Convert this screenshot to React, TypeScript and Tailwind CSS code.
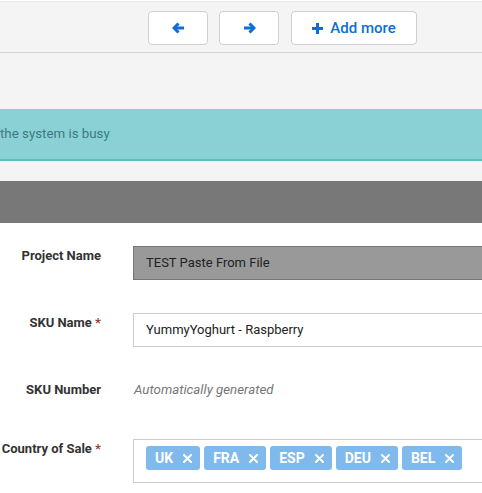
import React from "react";

const tags = ["UK", "FRA", "ESP", "DEU", "BEL"];

function Label({ text, required }: { text: string; required?: boolean }) {
  return (
    <div className="w-[101px] shrink-0 text-right text-[13px] leading-[16px] font-bold text-[#333] whitespace-nowrap pt-[2px]">
      {text}
      {required && <span className="text-[#9a3f3b]"> *</span>}
    </div>
  );
}

function ArrowIcon({ dir }: { dir: "left" | "right" }) {
  return (
    <svg width="13" height="12" viewBox="0 0 13 12" className={dir === "right" ? "-scale-x-100" : ""}>
      <path d="M6.5 1.5 L2 6 L6.5 10.5" fill="none" stroke="currentColor" strokeWidth="3" strokeLinejoin="miter" />
      <path d="M2.5 6 H12" fill="none" stroke="currentColor" strokeWidth="3" />
    </svg>
  );
}

export default function App() {
  return (
    <div
      className="w-[482px] h-[493px] overflow-hidden bg-white"
      style={{ fontFamily: "Roboto, 'Liberation Sans', sans-serif" }}
    >
      <div className="h-px bg-white" />
      <div className="h-[52px] bg-[#f4f4f4] border-t border-[#ebebeb] border-b border-b-[#d6d6d6] flex items-start pt-[9px] pl-[148px]">
        <button className="w-[60px] h-[34px] bg-white border border-[#cfcfcf] rounded-[4px] flex items-center justify-center text-[#0b6fd6]">
          <ArrowIcon dir="left" />
        </button>
        <button className="ml-[11px] w-[60px] h-[34px] bg-white border border-[#cfcfcf] rounded-[4px] flex items-center justify-center text-[#0b6fd6]">
          <ArrowIcon dir="right" />
        </button>
        <button className="ml-[12px] w-[126px] h-[34px] bg-white border border-[#cfcfcf] rounded-[4px] flex items-center justify-center gap-[7px] text-[#0b6fd6] text-[15px] font-medium">
          <svg width="11" height="11" viewBox="0 0 11 11">
            <path d="M5.5 0 V11 M0 5.5 H11" stroke="currentColor" strokeWidth="3" />
          </svg>
          <span>Add more</span>
        </button>
      </div>
      <div className="h-[56px] bg-[#f4f4f4]" />
      <div className="h-[52px] bg-[#8ad1d6] border-b-2 border-[#5bbec5] flex items-center text-[13.3px] text-[#3c7a80]">
        the system is busy
      </div>
      <div className="h-[20px] bg-[#f4f4f4]" />
      <div className="h-[42px] bg-[#787878]" />
      <div className="pt-[23px] flex flex-col">
        <div className="flex gap-[32px]">
          <Label text="Project Name" />
          <div className="flex-1 h-[34px] bg-[#999999] border border-[#777] border-r-0 flex items-center pl-[12px] text-[13px] text-[#222]">
            TEST Paste From File
          </div>
        </div>
        <div className="flex gap-[32px] mt-[33px]">
          <Label text="SKU Name" required />
          <div className="flex-1 h-[34px] bg-white border border-[#cccccc] border-r-0 flex items-center pl-[12px] text-[13px] text-[#222]">
            YummyYoghurt - Raspberry
          </div>
        </div>
        <div className="flex gap-[32px] mt-[33px]">
          <Label text="SKU Number" />
          <div className="pt-[2px] pl-px text-[13.3px] leading-[16px] italic text-[#777]">
            Automatically generated
          </div>
        </div>
        <div className="flex gap-[32px] mt-[41px]">
          <Label text="Country of Sale" required />
          <div className="flex-1 h-[44px] bg-white border border-[#cccccc] border-r-0 flex items-start pt-[6px] pl-[12px] gap-[4px]">
            {tags.map((t) => (
              <span
                key={t}
                className="h-[24px] rounded-[3px] bg-[#80b9eb] text-white font-bold text-[14px] flex items-center pl-[9px] pr-[8px] gap-[10px]"
              >
                {t}
                <svg width="9" height="9" viewBox="0 0 9 9">
                  <path d="M1 1 L8 8 M8 1 L1 8" stroke="white" strokeWidth="2" strokeLinecap="round" />
                </svg>
              </span>
            ))}
          </div>
        </div>
      </div>
    </div>
  );
}
